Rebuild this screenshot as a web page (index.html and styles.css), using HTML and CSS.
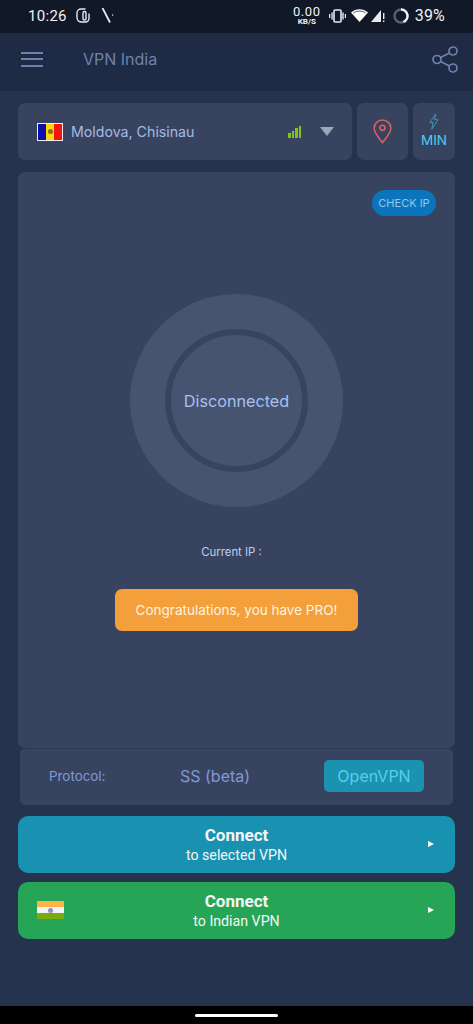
FILE: index.html
```html
<!DOCTYPE html>
<html lang="en">
<head>
  <meta charset="UTF-8" />
  <meta name="viewport" content="width=device-width, initial-scale=1.0"/>
  <title>VPN India</title>
  <link rel="stylesheet" href="styles.css">
</head>
<body>
  <div class="status-bar">
    <div class="status-left">
      <span class="clock">10:26</span>
      <svg class="at-icon" width="14" height="15" viewBox="0 0 14 15" fill="none" stroke="#e8eaee" stroke-width="1.400"><path d="M7 10.500V5a1.500 1.500 0 0 1 3 0v5.500a1.500 1.500 0 0 1-3 0"/><path d="M13 5.500v5a3.500 3.500 0 0 1-3.500 3.500h-4A4.500 4.500 0 0 1 1 9.500V5a4 4 0 0 1 4-4h4.500"/></svg>
      <svg class="tick-icon" width="14" height="16" viewBox="0 0 14 16"><path d="M1.500 0 9 14.500" stroke="#e8eaee" stroke-width="1.800"/><rect x="11" y="6.500" width="1.200" height="1.200" fill="#e8eaee"/></svg>
    </div>
    <div class="status-right">
      <div class="speed"><span class="speed-num">0.00</span><span class="speed-unit">KB/S</span></div>
      <svg class="vibrate" width="17" height="14" viewBox="0 0 17 14" fill="#e8eaee"><rect x="5" y="1" width="7" height="12" rx="1" fill="none" stroke="#e8eaee" stroke-width="1.600"/><rect x="2.300" y="3.500" width="1.400" height="7"/><rect x="13.300" y="3.500" width="1.400" height="7"/><rect x="0" y="5" width="1.200" height="4"/><rect x="15.800" y="5" width="1.200" height="4"/></svg>
      <svg class="wifi" width="17" height="13" viewBox="0 0 17 13"><path d="M0 3.600C4.500-.9 12.500-.9 17 3.600L8.500 13z" fill="#fff"/><path d="M2.300 4C5.800 1.400 11.200 1.400 14.700 4" stroke="#111827" stroke-width=".7" fill="none"/></svg>
      <svg class="signal" width="14" height="14" viewBox="0 0 14 14"><path d="M10 1v12H0z" fill="#e8eaee"/><rect x="12" y="4" width="1.400" height="6" fill="#e8eaee"/><rect x="12" y="11.500" width="1.400" height="1.500" fill="#e8eaee"/></svg>
      <svg class="battery" width="16" height="16" viewBox="0 0 16 16" fill="none" stroke-width="2.400"><circle cx="8" cy="8" r="6.500" stroke="#5a5f68"/><path d="M8 1.500A6.500 6.500 0 0 1 10.500 14" stroke="#f2f3f5"/></svg>
      <span class="percent">39%</span>
    </div>
  </div>

  <header class="toolbar">
    <div class="menu-icon"><span></span><span></span><span></span></div>
    <h1 class="title">VPN India</h1>
    <svg class="share-icon" width="28" height="29" viewBox="0 0 28 29" fill="none" stroke="#6d83ad" stroke-width="1.700"><circle cx="22" cy="6" r="4"/><circle cx="22" cy="23" r="4"/><circle cx="6" cy="14.500" r="4"/><path d="M9.500 12.500 18.500 8M9.500 16.500 18.500 21"/></svg>
  </header>

  <main class="content">
    <div class="top-row">
      <div class="card selector">
        <div class="flag-md"><i class="md-blue"></i><i class="md-yellow"><b></b></i><i class="md-red"></i></div>
        <span class="country">Moldova, Chisinau</span>
        <div class="bars"><i class="b1"></i><i class="b2"></i><i class="b3"></i><i class="b4"></i></div>
        <span class="caret"></span>
      </div>
      <div class="card pin-card">
        <svg width="19" height="25" viewBox="0 0 20 27" fill="none" stroke="#d9605f" stroke-width="1.700"><path d="M10 25.500C6 19.800 1 15.500 1 10a9 9 0 0 1 18 0c0 5.500-5 9.800-9 15.500z"/><circle cx="10" cy="9.500" r="2.800"/></svg>
      </div>
      <div class="card min-card">
        <svg width="10" height="17" viewBox="0 0 11 18" fill="none" stroke="#3d9fc4" stroke-width="1"><path d="M7.500 .5 1 10h3.500L3 17.500 10 7H6z"/></svg>
        <span class="min-label">MIN</span>
      </div>
    </div>

    <section class="card main-card">
      <button class="check-ip">CHECK IP</button>
      <div class="outer-circle">
        <div class="inner-circle">Disconnected</div>
      </div>
      <p class="current-ip">Current IP :</p>
      <div class="pro-banner">Congratulations, you have PRO!</div>
    </section>

    <section class="card protocol">
      <span class="proto-label">Protocol:</span>
      <span class="proto-ss">SS (beta)</span>
      <span class="proto-open">OpenVPN</span>
    </section>

    <button class="connect blue">
      <span class="connect-main">Connect</span>
      <span class="connect-sub">to selected VPN</span>
      <span class="arrow"></span>
    </button>
    <button class="connect green">
      <span class="flag-in"><i class="in-orange"></i><i class="in-white"><b></b></i><i class="in-green"></i></span>
      <span class="connect-main">Connect</span>
      <span class="connect-sub">to Indian VPN</span>
      <span class="arrow"></span>
    </button>
  </main>

  <div class="nav-bar"><span class="nav-pill"></span></div>
</body>
</html>
```

FILE: styles.css
```css
* {
  box-sizing: border-box;
}
html, body {
  margin: 0;
  padding: 0;
}
body {
  width: 473px;
  height: 1024px;
  overflow: hidden;
  display: flex;
  flex-direction: column;
  background-color: #26334f;
  font-family: Inter, "Liberation Sans", sans-serif;
}

/* status bar */
.status-bar {
  height: 33px;
  flex: none;
  background-color: #111827;
  color: #f0f1f3;
  font-family: Roboto, "Liberation Sans", sans-serif;
  display: flex;
  justify-content: space-between;
  align-items: center;
  padding: 0 28px 2px;
}
.status-left, .status-right {
  display: flex;
  align-items: center;
}
.clock {
  font-size: 15px;
  letter-spacing: .3px;
}
.at-icon {
  margin-left: 9px;
}
.tick-icon {
  margin-left: 11px;
}
.speed {
  display: flex;
  flex-direction: column;
  align-items: center;
  line-height: 1;
}
.speed-num {
  font-size: 13px;
  letter-spacing: .6px;
}
.speed-unit {
  font-size: 8px;
  font-weight: 700;
}
.vibrate {
  margin-left: 8px;
}
.wifi {
  margin-left: 5px;
}
.signal {
  margin-left: 3px;
}
.battery {
  margin-left: 8px;
}
.percent {
  font-size: 16px;
  margin-left: 6px;
  letter-spacing: .2px;
}

/* toolbar */
.toolbar {
  height: 58px;
  flex: none;
  background-color: #1f2a44;
  display: flex;
  align-items: center;
  padding: 0 14px 6px 21px;
}
.menu-icon {
  width: 22px;
  display: flex;
  flex-direction: column;
  gap: 4.500px;
}
.menu-icon span {
  height: 2px;
  background-color: #6d83ad;
}
.title {
  margin: 0 0 0 40px;
  font-size: 16px;
  font-weight: 400;
  color: #6d83ad;
  flex: 1;
}

/* content */
.content {
  flex: 1;
  display: flex;
  flex-direction: column;
  padding: 12px 18px 0;
}
.card {
  background-color: #38445f;
  border-radius: 7px;
}
.top-row {
  display: flex;
  gap: 5px;
  height: 57px;
}
.selector {
  width: 335px;
  display: flex;
  align-items: center;
  padding: 0 19px 0 19px;
}
.flag-md {
  width: 26px;
  height: 18px;
  border: 1px solid #eef0f4;
  display: flex;
}
.flag-md i {
  flex: 1;
  display: flex;
  align-items: center;
  justify-content: center;
}
.md-blue {
  background-color: #0a0fa8;
}
.md-yellow {
  background-color: #fcd80a;
}
.md-yellow b {
  width: 5px;
  height: 5px;
  border-radius: 50%;
  background-color: #8a6a20;
}
.md-red {
  background-color: #f4140c;
}
.country {
  margin-left: 8px;
  font-size: 14.200px;
  color: #a3b9e6;
  flex: 1;
}
.bars {
  display: flex;
  align-items: flex-end;
  gap: 1px;
  height: 12px;
  margin-right: 19px;
}
.bars i {
  width: 2.500px;
  background-color: #7fc31c;
}
.b1 { height: 5px; }
.b2 { height: 7px; }
.b3 { height: 10px; }
.b4 { height: 12px; }
.caret {
  width: 0;
  height: 0;
  margin-right: -1px;
  border-left: 7px solid transparent;
  border-right: 7px solid transparent;
  border-top: 9px solid #9aa6ba;
}
.pin-card {
  width: 51px;
  display: flex;
  align-items: center;
  justify-content: center;
}
.min-card {
  width: 42px;
  margin-left: auto;
  display: flex;
  flex-direction: column;
  align-items: center;
  padding-top: 10px;
}
.min-label {
  font-size: 13.500px;
  color: #4fcdf0;
  line-height: 17px;
  margin-top: 2px;
}

.main-card {
  margin-top: 12px;
  height: 576px;
  display: flex;
  flex-direction: column;
  align-items: center;
  padding-top: 18px;
}
.check-ip {
  align-self: flex-end;
  margin-right: 19px;
  width: 64px;
  height: 26px;
  border: none;
  border-radius: 13px;
  background-color: #0a75bd;
  color: #8fc8ec;
  font-family: Inter, "Liberation Sans", sans-serif;
  font-size: 11px;
  padding: 0;
}
.outer-circle {
  margin-top: 78px;
  width: 213px;
  height: 213px;
  border-radius: 50%;
  background-color: #465470;
  display: flex;
  align-items: center;
  justify-content: center;
}
.inner-circle {
  width: 143px;
  height: 143px;
  border-radius: 50%;
  border: 6px solid #38445f;
  display: flex;
  align-items: center;
  justify-content: center;
  color: #a9c0f0;
  font-size: 16.200px;
}
.current-ip {
  margin: 38px 10px 0 0;
  font-size: 11.400px;
  line-height: 14px;
  color: #bcd0f5;
}
.pro-banner {
  margin-top: 30px;
  width: 243px;
  height: 42px;
  border-radius: 7px;
  background-color: #f3a03c;
  color: #fff3df;
  font-size: 13.500px;
  display: flex;
  align-items: center;
  justify-content: center;
}

.protocol {
  margin: 0 2px;
  height: 57px;
  border-top: 1px solid #2c3852;
  border-radius: 5px;
  display: flex;
  align-items: center;
  padding: 0 0 2px 29px;
}
.proto-label {
  font-size: 13.400px;
  color: #7f99d6;
  width: 131px;
}
.proto-ss {
  font-size: 16px;
  color: #7f99d6;
  width: 144px;
}
.proto-open {
  width: 100px;
  height: 32px;
  border-radius: 5px;
  background-color: #1b92b0;
  color: #57cdf0;
  font-size: 16px;
  display: flex;
  align-items: center;
  justify-content: center;
}

.connect {
  position: relative;
  height: 57px;
  margin-top: 11px;
  border: none;
  border-radius: 10px;
  color: #f2f7f7;
  font-family: Roboto, "Liberation Sans", sans-serif;
  display: flex;
  flex-direction: column;
  align-items: center;
  justify-content: center;
  padding: 0;
}
.connect.green {
  margin-top: 9px;
  background-color: #26a556;
}
.connect.blue {
  background-color: #1991b0;
}
.connect-main {
  font-size: 17px;
  font-weight: 700;
  line-height: 20px;
}
.connect-sub {
  font-size: 14.200px;
  line-height: 20px;
}
.arrow {
  position: absolute;
  right: 21px;
  top: 25px;
  width: 0;
  height: 0;
  border-left: 6px solid #fff;
  border-top: 3.500px solid transparent;
  border-bottom: 3.500px solid transparent;
}
.flag-in {
  position: absolute;
  left: 19px;
  top: 19px;
  width: 27px;
  height: 18px;
  display: flex;
  flex-direction: column;
}
.flag-in i {
  flex: 1;
  display: flex;
  align-items: center;
  justify-content: center;
}
.in-orange {
  background-color: #ffb445;
}
.in-white {
  background-color: #f4f4f6;
}
.in-white b {
  width: 5px;
  height: 5px;
  border-radius: 50%;
  background-color: #8a90c8;
}
.in-green {
  background-color: #7bab0c;
}

.nav-bar {
  height: 18px;
  flex: none;
  background-color: #000;
  display: flex;
  justify-content: center;
  align-items: center;
}
.nav-pill {
  width: 83px;
  height: 3px;
  border-radius: 2px;
  background-color: #fff;
}
```
